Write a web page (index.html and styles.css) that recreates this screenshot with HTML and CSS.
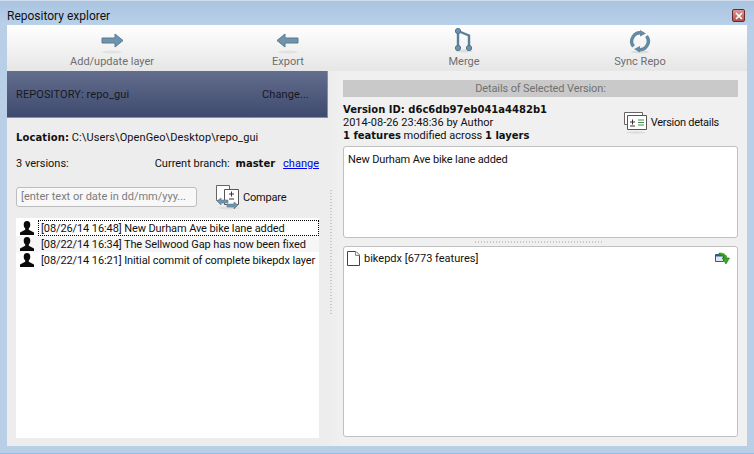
FILE: index.html
```html
<!DOCTYPE html>
<html>
<head>
<meta charset="utf-8">
<title>Repository explorer</title>
<link rel="stylesheet" href="styles.css">
</head>
<body>
<div class="window">
  <header class="titlebar">
    <span class="title">Repository explorer</span>
    <span class="close"><svg width="8" height="8" viewBox="0 0 8 8"><path d="M1 1l6 6M7 1L1 7" stroke="#fff" stroke-width="1.6"/></svg></span>
  </header>
  <div class="client">
    <nav class="toolbar">
      <div class="tool">
        <svg class="tool-icon" width="32" height="30" viewBox="0 0 32 30"><ellipse cx="16" cy="27" rx="10" ry="1.500" fill="#e2e2e2"/><path d="M6 13h13V9l8 6.500-8 6.500v-4H6z" fill="#6f93aa" stroke="#587b94"/></svg>
        <span>Add/update layer</span>
      </div>
      <div class="tool">
        <svg class="tool-icon" width="32" height="30" viewBox="0 0 32 30"><ellipse cx="16" cy="27" rx="10" ry="1.500" fill="#e2e2e2"/><path d="M26 13H13V9l-8 6.500 8 6.500v-4h13z" fill="#6f93aa" stroke="#587b94"/></svg>
        <span>Export</span>
      </div>
      <div class="tool">
        <svg class="tool-icon" width="32" height="30" viewBox="0 0 32 30"><ellipse cx="16" cy="26" rx="9" ry="1.500" fill="#dcdcdc"/><path d="M10 8v14M10 6l11 4.500V22" fill="none" stroke="#5b7f98" stroke-width="2.400"/><circle cx="10" cy="6" r="2.600" fill="#6f93aa" stroke="#4f7390"/><circle cx="10" cy="23" r="2.600" fill="#6f93aa" stroke="#4f7390"/><circle cx="21" cy="23" r="2.600" fill="#6f93aa" stroke="#4f7390"/></svg>
        <span>Merge</span>
      </div>
      <div class="tool">
        <svg class="tool-icon" width="32" height="30" viewBox="0 0 32 30"><ellipse cx="16" cy="27" rx="9" ry="1.500" fill="#dcdcdc"/><path d="M9.500 21.500A8.500 8.500 0 0 1 18 8M22.500 11A8.500 8.500 0 0 1 14 24.500" fill="none" stroke="#6389a3" stroke-width="3.400"/><path d="M16 5l6 3.500-6 3zM16 27.500l-6-3.500 6-3z" fill="#6389a3"/></svg>
        <span>Sync Repo</span>
      </div>
    </nav>
    <div class="panes">
      <section class="left">
        <div class="repo-head">
          <span>REPOSITORY: repo_gui</span>
          <span>Change...</span>
        </div>
        <div class="left-body">
          <div class="location"><b>Location:</b> C:\Users\OpenGeo\Desktop\repo_gui</div>
          <div class="branch-row">
            <span>3 versions:</span>
            <span class="branch">Current branch: <b>master</b><a href="#">change</a></span>
          </div>
          <div class="search-row">
            <div class="search">[enter text or date in dd/mm/yyy...</div>
            <div class="compare">
              <svg width="26" height="26" viewBox="0 0 26 26"><ellipse cx="14" cy="24" rx="11" ry="1.500" fill="#ddd"/><path d="M1.500 1.500h13v15h-13z" fill="#fff" stroke="#666"/><path d="M9.500 5.500h14v15h-14z" fill="#fff" stroke="#555"/><path d="M14 10h5M16.500 7.500v5M14 15h5" stroke="#333"/><path d="M2 17l4-3v2h7v3H6v2zM23 21l-4-3v2h-7v3h7v2z" fill="#6f93aa" stroke="#587b94" stroke-width=".6"/></svg>
              <span>Compare</span>
            </div>
          </div>
          <ul class="versions">
            <li class="row selected"><svg class="user" width="16" height="16" viewBox="0 0 16 16"><path d="M8 1c2.300 0 3.300 1.700 3.300 3.700 0 1.500-.7 3-1.500 3.700v1.300L15 12.500V15H1v-2.500l5.200-2.800V8.400C5.400 7.700 4.700 6.200 4.700 4.700 4.700 2.700 5.700 1 8 1z"/></svg><span class="label">[08/26/14 16:48] New Durham Ave bike lane added</span></li>
            <li class="row alt"><svg class="user" width="16" height="16" viewBox="0 0 16 16"><path d="M8 1c2.300 0 3.300 1.700 3.300 3.700 0 1.500-.7 3-1.500 3.700v1.300L15 12.500V15H1v-2.500l5.200-2.800V8.400C5.400 7.700 4.700 6.200 4.700 4.700 4.700 2.700 5.700 1 8 1z"/></svg><span class="label">[08/22/14 16:34] The Sellwood Gap has now been fixed</span></li>
            <li class="row"><svg class="user" width="16" height="16" viewBox="0 0 16 16"><path d="M8 1c2.300 0 3.300 1.700 3.300 3.700 0 1.500-.7 3-1.500 3.700v1.300L15 12.500V15H1v-2.500l5.200-2.800V8.400C5.400 7.700 4.700 6.200 4.700 4.700 4.700 2.700 5.700 1 8 1z"/></svg><span class="label">[08/22/14 16:21] Initial commit of complete bikepdx layer</span></li>
          </ul>
        </div>
      </section>
      <div class="vsplit"><span class="vdots"></span></div>
      <section class="right">
        <div class="details-head">Details of Selected Version:</div>
        <div class="info-row">
          <div class="info">
            <div><b>Version ID: d6c6db97eb041a4482b1</b></div>
            <div>2014-08-26 23:48:36 by Author</div>
            <div><b>1 features</b> modified across <b>1 layers</b></div>
          </div>
          <div class="vdetails">
            <svg width="25" height="24" viewBox="0 0 25 24"><ellipse cx="13" cy="21.500" rx="10" ry="1.200" fill="#ddd"/><path d="M1.500 1.500h18v12h-18z" fill="#fff" stroke="#666"/><path d="M4.500 4.500h19v14h-19z" fill="#fff" stroke="#555"/><path d="M7 11h5M9.500 8.500v5M7 15h5" stroke="#333"/><path d="M15 9h6M15 11.500h6M15 14h6" stroke="#3f8f4f"/></svg>
            <span>Version details</span>
          </div>
        </div>
        <div class="box message">New Durham Ave bike lane added</div>
        <div class="hsplit"><span class="hdots"></span></div>
        <div class="box layers">
          <div class="layer">
            <svg width="13" height="15" viewBox="0 0 13 15"><path d="M.500.500h8.500l3.500 3.500v10.500H.500z" fill="#fff" stroke="#444"/><path d="M8.500.500v4h4" fill="#eee" stroke="#888"/></svg>
            <span class="layer-name">bikepdx [6773 features]</span>
            <svg class="export" width="15" height="13" viewBox="0 0 15 13"><path d="M.500 2.500h8v7h-8z" fill="#dfe9f5" stroke="#2d5a8e"/><path d="M.500 2.500h8v2h-8z" fill="#2d5a8e"/><path d="M4 1c5 0 7 1.500 8 5h2.500L11 12 7 6h2.500C9 4 7 3 4 3z" fill="#3aa51e" stroke="#1e7a10" stroke-width=".6"/></svg>
          </div>
        </div>
      </section>
    </div>
  </div>
</div>
</body>
</html>
```

FILE: styles.css
```css
* { box-sizing: border-box; }
html, body { margin: 0; padding: 0; }
body {
  width: 754px;
  height: 454px;
  overflow: hidden;
  font-family: Roboto, "Open Sans", sans-serif;
  font-size: 11px;
  color: #111;
}
b {
  font-family: "DejaVu Sans", Roboto, sans-serif;
  font-size: 10px;
  font-weight: 700;
}
.window {
  width: 754px;
  height: 454px;
  display: flex;
  flex-direction: column;
  padding: 0 7px 7px;
  background: #b9cfe8;
  border-top: 1px solid #d0dded;
  border-bottom: 1px solid #7ccbec;
}
.titlebar {
  flex: 0 0 24px;
  display: flex;
  align-items: center;
  justify-content: space-between;
  background: linear-gradient(#aac4e0, #b9d0ea);
  margin: 0 -7px;
  padding: 5px 9px 0 7px;
}
.title { font-size: 12px; color: #111; }
.close {
  width: 13px;
  height: 13px;
  display: flex;
  align-items: center;
  justify-content: center;
  background: linear-gradient(#d99a94, #b0524c);
  border: 1px solid #6a2a28;
  border-radius: 2px;
}
.client {
  flex: 1;
  display: flex;
  flex-direction: column;
  background: #eeeeee;
  min-height: 0;
}
.toolbar {
  flex: 0 0 46px;
  display: grid;
  grid-template-columns: repeat(4, 176px);
  padding-left: 17px;
  background: linear-gradient(#ffffff, #e6e6e6);
}
.tool {
  display: flex;
  flex-direction: column;
  align-items: center;
  color: #6e6e6e;
  overflow: hidden;
}
.tool-icon { flex: none; }
.tool span { line-height: 14px; }
.panes { flex: 1; display: flex; min-height: 0; }
.left {
  flex: 0 0 321px;
  min-width: 0;
  display: flex;
  flex-direction: column;
  background: #ededed;
}
.repo-head {
  flex: 0 0 47px;
  display: flex;
  align-items: center;
  justify-content: space-between;
  padding: 1px 18px 0 9px;
  background: linear-gradient(#636d8d, #3e4a6e);
  border: 1px solid #8a8f9e;
  border-width: 0 1px 1px 0;
  color: #16181f;
  letter-spacing: .1px;
}
.left-body {
  flex: 1;
  display: flex;
  flex-direction: column;
  padding: 0 9px 8px 9px;
  min-height: 0;
}
.location { margin-top: 12px; line-height: 16px; letter-spacing: .1px; }
.branch-row {
  display: flex;
  justify-content: space-between;
  margin-top: 10px;
  line-height: 16px;
}
.branch b { margin: 0 8px 0 3px; }
.branch a { color: #0000ee; text-decoration: underline; }
.search-row { display: flex; align-items: center; margin-top: 12px; height: 26px; }
.search {
  width: 181px;
  height: 20px;
  padding: 0 4px;
  line-height: 18px;
  background: #f8f8f8;
  border: 1px solid #bdbdbd;
  border-radius: 3px;
  color: #7c7c7c;
  white-space: nowrap;
  overflow: hidden;
}
.compare { display: flex; align-items: center; gap: 2px; margin-left: 18px; letter-spacing: -.2px; }
.versions {
  flex: 1;
  list-style: none;
  margin: 8px 0 0;
  padding: 2px 0 0;
  background: #fff;
}
.row { display: flex; align-items: center; height: 16px; gap: 3px; padding-left: 3px; white-space: nowrap; }
.row.alt { background: #f6f6f6; }
.user { flex: none; fill: #0a0a0a; }
.label { flex: 1; line-height: 15px; padding-left: 3px; letter-spacing: -.1px; height: 16px; padding-top: 1px; }
.selected .label { outline: 1px dotted #000; outline-offset: -1px; }
.vsplit {
  flex: 0 0 15px;
  display: flex;
  align-items: center;
  background: linear-gradient(90deg, #ededed, #f0f0f0);
}
.vdots {
  width: 2px;
  height: 124px;
  margin: -14px 0 0 2px;
  background: repeating-linear-gradient(#c8c8c8 0 1px, transparent 1px 3px);
}
.right {
  flex: 1;
  display: flex;
  flex-direction: column;
  padding: 9px 9px 9px 0;
  background: #f0f0f0;
  min-width: 0;
}
.details-head {
  flex: 0 0 16px;
  background: #c9c9c9;
  color: #717171;
  text-align: center;
  line-height: 17px;
  letter-spacing: -.12px;
}
.info-row { display: flex; justify-content: space-between; align-items: center; margin-top: 6px; }
.info { line-height: 13px; }
.vdetails { display: flex; align-items: center; gap: 3px; margin-right: 19px; letter-spacing: -.27px; }
.box {
  background: #fff;
  border: 1px solid #c0c0c0;
  border-radius: 3px;
}
.message { flex: 0 0 92px; margin-top: 4px; padding: 5px 4px; line-height: 15px; letter-spacing: -.13px; }
.hsplit { flex: 0 0 8px; display: flex; align-items: center; justify-content: center; }
.hdots {
  width: 128px;
  height: 2px;
  margin-right: 3px;
  background: repeating-linear-gradient(90deg, #c8c8c8 0 1px, transparent 1px 3px);
}
.layers { flex: 1; padding: 3px 7px 0 3px; min-height: 0; }
.layer { display: flex; align-items: center; height: 16px; }
.layer-name { flex: 1; margin-left: 4px; }
```
